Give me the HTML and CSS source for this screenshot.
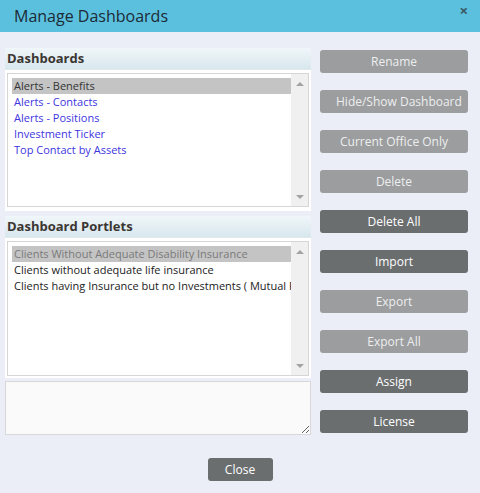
FILE: index.html
```html
<!DOCTYPE html>
<html>
<head>
<meta charset="utf-8">
<link rel="stylesheet" href="styles.css">
</head>
<body>
<div class="dialog">
  <div class="titlebar">
    <span class="title">Manage Dashboards</span>
    <span class="close-x">×</span>
  </div>
  <div class="content">
    <div class="left">
      <div class="panel panel-first">
        <div class="panel-head">Dashboards</div>
        <div class="listbox">
          <ul class="items">
            <li class="item selected">Alerts - Benefits</li>
            <li class="item link">Alerts - Contacts</li>
            <li class="item link">Alerts - Positions</li>
            <li class="item link">Investment Ticker</li>
            <li class="item link">Top Contact by Assets</li>
          </ul>
          <div class="scrollbar"><span class="arrow up"></span><span class="arrow down"></span></div>
        </div>
      </div>
      <div class="panel panel-second">
        <div class="panel-head">Dashboard Portlets</div>
        <div class="listbox">
          <ul class="items">
            <li class="item selected dim">Clients Without Adequate Disability Insurance</li>
            <li class="item">Clients without adequate life insurance</li>
            <li class="item">Clients having Insurance but no Investments ( Mutual Funds )</li>
          </ul>
          <div class="scrollbar"><span class="arrow up"></span><span class="arrow down"></span></div>
        </div>
      </div>
      <textarea class="notes"></textarea>
    </div>
    <div class="right">
      <button class="btn light">Rename</button>
      <button class="btn light">Hide/Show Dashboard</button>
      <button class="btn light">Current Office Only</button>
      <button class="btn light">Delete</button>
      <button class="btn dark">Delete All</button>
      <button class="btn dark">Import</button>
      <button class="btn light">Export</button>
      <button class="btn light">Export All</button>
      <button class="btn dark">Assign</button>
      <button class="btn dark">License</button>
    </div>
  </div>
  <div class="footer">
    <button class="btn dark close-btn">Close</button>
  </div>
</div>
</body>
</html>
```

FILE: styles.css
```css
html, body {
  margin: 0;
  padding: 0;
}
body {
  background: #ebeef6;
  font-family: "Open Sans", "DejaVu Sans", sans-serif;
  width: 480px;
  height: 493px;
  overflow: hidden;
}
.dialog {
  display: flex;
  flex-direction: column;
}
.titlebar {
  height: 32px;
  background: #5bc0de;
  display: flex;
  justify-content: space-between;
  align-items: flex-start;
  padding: 0 12px 0 14px;
  box-sizing: border-box;
}
.title {
  font-size: 16px;
  line-height: 32px;
  color: #1c2b36;
}
.close-x {
  font-size: 15px;
  font-weight: bold;
  line-height: 20px;
  color: #3a5866;
}
.content {
  display: flex;
  padding: 16px 0 0 5px;
  gap: 9px;
}
.left {
  width: 306px;
  display: flex;
  flex-direction: column;
}
.panel {
  background: #fff;
  padding: 0 2px 4px;
}
.panel-second {
  margin-top: 5px;
  padding-bottom: 2px;
}
.panel-head {
  margin: 0 -2px;
  height: 21px;
  line-height: 21px;
  padding-left: 2px;
  font-size: 13px;
  font-weight: bold;
  color: #3b3632;
  background: linear-gradient(#f0f6f9, #d8e7ee);
  border-bottom: 1px solid #e2e8ea;
  margin-bottom: 3px;
}
.listbox {
  position: relative;
  height: 134px;
  border: 1px solid #d6d6d6;
  background: #fff;
  box-sizing: border-box;
  display: flex;
  overflow: hidden;
}
.panel-second .listbox {
  height: 135px;
}
.items {
  list-style: none;
  margin: 0;
  padding: 4px 0 0 4px;
  flex: 1;
  min-width: 0;
}
.item {
  height: 16px;
  line-height: 16px;
  font-size: 11px;
  padding-left: 2px;
  white-space: nowrap;
  overflow: hidden;
  color: #222;
}
.item.link {
  color: #3d35e0;
}
.item.selected {
  background: #c4c4c4;
  color: #333;
}
.item.selected.dim {
  color: #7a7a7a;
}
.scrollbar {
  width: 17px;
  background: #f0f0f0;
  display: flex;
  flex-direction: column;
  justify-content: space-between;
  align-items: center;
  padding: 8px 0 7px;
  box-sizing: border-box;
}
.arrow {
  width: 0;
  height: 0;
  border-left: 4px solid transparent;
  border-right: 4px solid transparent;
}
.arrow.up {
  border-bottom: 4px solid #a3a3a3;
}
.arrow.down {
  border-top: 4px solid #a3a3a3;
}
.notes {
  margin: 3px 0 0;
  height: 54px;
  width: 306px;
  box-sizing: border-box;
  border: 1px solid #d8d8d8;
  background: #fafafa;
  resize: both;
  padding: 2px;
  font-family: inherit;
}
.right {
  display: flex;
  flex-direction: column;
  gap: 17px;
  padding-top: 2px;
}
.btn {
  width: 148px;
  height: 23px;
  border: none;
  border-radius: 3px;
  padding: 0 16px;
  font-family: "Open Sans", "DejaVu Sans", sans-serif;
  font-size: 12px;
  white-space: nowrap;
  text-align: center;
  margin: 0;
}
.btn.light {
  background: #9b9d9f;
  color: #eeeeee;
}
.btn.dark {
  background: #6b6e6f;
  color: #ffffff;
}
.footer {
  display: flex;
  justify-content: center;
  padding-top: 23px;
}
.close-btn {
  width: 65px;
  padding: 0;
}
```
